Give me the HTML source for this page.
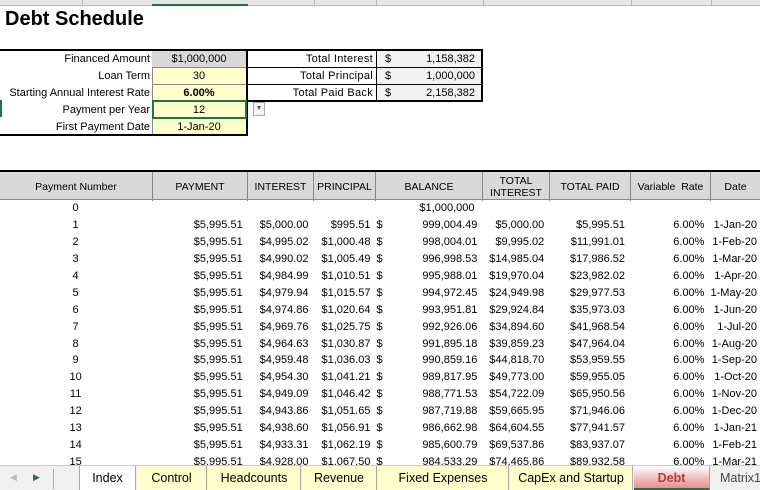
<!DOCTYPE html>
<html><head><style>
*{margin:0;padding:0;box-sizing:border-box}
body{width:760px;height:490px;overflow:hidden;background:#fff;font-family:"Liberation Sans",Arial,sans-serif;font-size:11px;color:#000;position:relative}
.a{position:absolute;white-space:nowrap}
.r{text-align:right}.c{text-align:center}
#colhdr{position:absolute;left:0;top:0;width:760px;height:6px;background:#e6e6e6;border-bottom:1px solid #bbb}
.inp{position:absolute;height:17px;line-height:16px}
table.d{position:absolute;left:0;top:200px;border-collapse:collapse}
table.d td{height:16.9px;padding:0 3px;font-size:11px;white-space:nowrap;text-align:right}
#hdr{position:absolute;left:0;top:170px;width:760px;height:30px;background:#d9d9d9;border-top:2px solid #000;border-bottom:1px solid #888}
#hdr div{position:absolute;top:0;height:29px;border-right:1px solid #888;display:flex;align-items:center;justify-content:center;text-align:center;font-size:10.5px;line-height:12px}
#tabs{position:absolute;left:0;top:465px;width:760px;height:25px;background:#f0f0f0;border-top:1px solid #ccc}
.tab{position:absolute;top:0;height:24px;line-height:24px;text-align:center;font-size:12.5px;border-right:1px solid #aaa;background:#ffffcc}
</style></head><body>
<div id="colhdr"><div class="a" style="left:152px;top:0;width:96px;height:6px;border-bottom:2px solid #217346"></div>
<div class="a" style="left:82px;top:0;width:1px;height:6px;background:#bbb"></div>
<div class="a" style="left:314px;top:0;width:1px;height:6px;background:#bbb"></div>
<div class="a" style="left:376px;top:0;width:1px;height:6px;background:#bbb"></div>
<div class="a" style="left:483px;top:0;width:1px;height:6px;background:#bbb"></div>
<div class="a" style="left:631px;top:0;width:1px;height:6px;background:#bbb"></div>
<div class="a" style="left:711px;top:0;width:1px;height:6px;background:#bbb"></div></div>
<div class="a" style="left:5px;top:8px;font-size:20px;font-weight:bold">Debt Schedule</div>

<div class="a" style="left:0;top:49px;width:248px;height:87px;border:2px solid #000;border-left:none"></div>
<div class="a" style="left:152px;top:51px;width:94px;height:83px;background:#ffffcc;border-left:1px solid #888"></div>
<div class="a" style="left:152px;top:51px;width:94px;height:17px;background:#d9d9d9;border-bottom:1px solid #888"></div>
<div class="a" style="left:152px;top:84px;width:94px;height:1px;background:#888"></div>
<div class="a" style="left:152px;top:101px;width:94px;height:1px;background:#888"></div>
<div class="a" style="left:152px;top:118px;width:94px;height:1px;background:#888"></div>
<div class="a" style="left:152px;top:100px;width:95px;height:19px;border:2px solid #217346"></div>
<div class="a" style="left:253px;top:102px;width:12px;height:14px;border:1px solid #aaa;background:#f4f4f4;font-size:7px;line-height:12px;text-align:center;color:#555">▼</div>

<div class="inp r a" style="left:0;top:51px;width:150px">Financed Amount</div>
<div class="inp r a" style="left:0;top:68px;width:150px">Loan Term</div>
<div class="inp r a" style="left:0;top:85px;width:150px">Starting Annual Interest Rate</div>
<div class="inp r a" style="left:0;top:102px;width:150px">Payment per Year</div>
<div class="inp r a" style="left:0;top:119px;width:150px">First Payment Date</div>
<div class="inp c a" style="left:152px;top:51px;width:94px">$1,000,000</div>
<div class="inp c a" style="left:152px;top:68px;width:94px">30</div>
<div class="inp c a" style="left:152px;top:85px;width:94px;font-weight:bold">6.00%</div>
<div class="inp c a" style="left:152px;top:102px;width:94px">12</div>
<div class="inp c a" style="left:152px;top:119px;width:94px">1-Jan-20</div>

<div class="a" style="left:247px;top:49px;width:236px;height:53px;border:2px solid #000;border-left:1px solid #000"></div>
<div class="a" style="left:376px;top:51px;width:105px;height:49px;background:#f2f2f2;border-left:1px solid #000"></div>
<div class="a" style="left:248px;top:67px;width:233px;height:1px;background:#000"></div>
<div class="a" style="left:248px;top:84px;width:233px;height:1px;background:#000"></div>
<div class="inp r a" style="left:248px;top:51px;width:125px;letter-spacing:.3px">Total Interest</div>
<div class="inp r a" style="left:248px;top:68px;width:125px;letter-spacing:.3px">Total Principal</div>
<div class="inp r a" style="left:248px;top:85px;width:125px;letter-spacing:.3px">Total Paid Back</div>
<div class="inp a" style="left:385px;top:51px">$</div><div class="inp r a" style="left:390px;top:51px;width:85px">1,158,382</div>
<div class="inp a" style="left:385px;top:68px">$</div><div class="inp r a" style="left:390px;top:68px;width:85px">1,000,000</div>
<div class="inp a" style="left:385px;top:85px">$</div><div class="inp r a" style="left:390px;top:85px;width:85px">2,158,382</div>

<div class="a" style="left:0;top:100px;width:2px;height:17px;background:#217346"></div>

<div id="hdr">
<div style="left:0;width:153px">Payment Number</div>
<div style="left:153px;width:95px">PAYMENT</div>
<div style="left:248px;width:66px">INTEREST</div>
<div style="left:314px;width:62px">PRINCIPAL</div>
<div style="left:376px;width:107px">BALANCE</div>
<div style="left:483px;width:67px">TOTAL<br>INTEREST</div>
<div style="left:550px;width:81px">TOTAL PAID</div>
<div style="left:631px;width:80px">Variable&nbsp; Rate</div>
<div style="left:711px;width:49px;border-right:none">Date</div>
</div>

<table class="d">
<colgroup><col style="width:153px"><col style="width:95px"><col style="width:66px"><col style="width:62px"><col style="width:14px"><col style="width:93px"><col style="width:67px"><col style="width:81px"><col style="width:80px"><col style="width:49px"></colgroup>
<tr><td style="text-align:center">0</td><td></td><td></td><td></td><td></td><td style="text-align:left;padding-left:32px">$1,000,000</td><td></td><td></td><td></td><td></td></tr>
<tr><td style="text-align:center">1</td><td>$5,995.51</td><td>$5,000.00</td><td>$995.51</td><td style="text-align:left">$</td><td>999,004.49</td><td>$5,000.00</td><td>$5,995.51</td><td>6.00%</td><td>1-Jan-20</td></tr>
<tr><td style="text-align:center">2</td><td>$5,995.51</td><td>$4,995.02</td><td>$1,000.48</td><td style="text-align:left">$</td><td>998,004.01</td><td>$9,995.02</td><td>$11,991.01</td><td>6.00%</td><td>1-Feb-20</td></tr>
<tr><td style="text-align:center">3</td><td>$5,995.51</td><td>$4,990.02</td><td>$1,005.49</td><td style="text-align:left">$</td><td>996,998.53</td><td>$14,985.04</td><td>$17,986.52</td><td>6.00%</td><td>1-Mar-20</td></tr>
<tr><td style="text-align:center">4</td><td>$5,995.51</td><td>$4,984.99</td><td>$1,010.51</td><td style="text-align:left">$</td><td>995,988.01</td><td>$19,970.04</td><td>$23,982.02</td><td>6.00%</td><td>1-Apr-20</td></tr>
<tr><td style="text-align:center">5</td><td>$5,995.51</td><td>$4,979.94</td><td>$1,015.57</td><td style="text-align:left">$</td><td>994,972.45</td><td>$24,949.98</td><td>$29,977.53</td><td>6.00%</td><td>1-May-20</td></tr>
<tr><td style="text-align:center">6</td><td>$5,995.51</td><td>$4,974.86</td><td>$1,020.64</td><td style="text-align:left">$</td><td>993,951.81</td><td>$29,924.84</td><td>$35,973.03</td><td>6.00%</td><td>1-Jun-20</td></tr>
<tr><td style="text-align:center">7</td><td>$5,995.51</td><td>$4,969.76</td><td>$1,025.75</td><td style="text-align:left">$</td><td>992,926.06</td><td>$34,894.60</td><td>$41,968.54</td><td>6.00%</td><td>1-Jul-20</td></tr>
<tr><td style="text-align:center">8</td><td>$5,995.51</td><td>$4,964.63</td><td>$1,030.87</td><td style="text-align:left">$</td><td>991,895.18</td><td>$39,859.23</td><td>$47,964.04</td><td>6.00%</td><td>1-Aug-20</td></tr>
<tr><td style="text-align:center">9</td><td>$5,995.51</td><td>$4,959.48</td><td>$1,036.03</td><td style="text-align:left">$</td><td>990,859.16</td><td>$44,818.70</td><td>$53,959.55</td><td>6.00%</td><td>1-Sep-20</td></tr>
<tr><td style="text-align:center">10</td><td>$5,995.51</td><td>$4,954.30</td><td>$1,041.21</td><td style="text-align:left">$</td><td>989,817.95</td><td>$49,773.00</td><td>$59,955.05</td><td>6.00%</td><td>1-Oct-20</td></tr>
<tr><td style="text-align:center">11</td><td>$5,995.51</td><td>$4,949.09</td><td>$1,046.42</td><td style="text-align:left">$</td><td>988,771.53</td><td>$54,722.09</td><td>$65,950.56</td><td>6.00%</td><td>1-Nov-20</td></tr>
<tr><td style="text-align:center">12</td><td>$5,995.51</td><td>$4,943.86</td><td>$1,051.65</td><td style="text-align:left">$</td><td>987,719.88</td><td>$59,665.95</td><td>$71,946.06</td><td>6.00%</td><td>1-Dec-20</td></tr>
<tr><td style="text-align:center">13</td><td>$5,995.51</td><td>$4,938.60</td><td>$1,056.91</td><td style="text-align:left">$</td><td>986,662.98</td><td>$64,604.55</td><td>$77,941.57</td><td>6.00%</td><td>1-Jan-21</td></tr>
<tr><td style="text-align:center">14</td><td>$5,995.51</td><td>$4,933.31</td><td>$1,062.19</td><td style="text-align:left">$</td><td>985,600.79</td><td>$69,537.86</td><td>$83,937.07</td><td>6.00%</td><td>1-Feb-21</td></tr>
<tr><td style="text-align:center">15</td><td>$5,995.51</td><td>$4,928.00</td><td>$1,067.50</td><td style="text-align:left">$</td><td>984,533.29</td><td>$74,465.86</td><td>$89,932.58</td><td>6.00%</td><td>1-Mar-21</td></tr>
</table>

<div id="tabs">
<div class="a" style="left:10px;top:6px;font-size:9px;color:#bbb">◀</div>
<div class="a" style="left:33px;top:6px;font-size:9px;color:#217346">▶</div>
<div class="a" style="left:53px;top:3px;width:1px;height:20px;background:#aaa"></div>
<div class="tab" style="left:79px;width:57px;background:#fff;border-left:1px solid #aaa">Index</div>
<div class="tab" style="left:137px;width:70px">Control</div>
<div class="tab" style="left:208px;width:93px">Headcounts</div>
<div class="tab" style="left:302px;width:75px">Revenue</div>
<div class="tab" style="left:378px;width:131px">Fixed Expenses</div>
<div class="tab" style="left:510px;width:123px">CapEx and Startup</div>
<div class="tab" style="left:634px;width:76px;background:linear-gradient(#fff,#f2b8b8 60%,#e89090);color:#c0392b;font-weight:bold;border-bottom:2px solid #217346">Debt</div>
<div class="tab" style="left:711px;width:60px;background:#f0f0f0;color:#444">Matrix1</div>
</div>
</body></html>
